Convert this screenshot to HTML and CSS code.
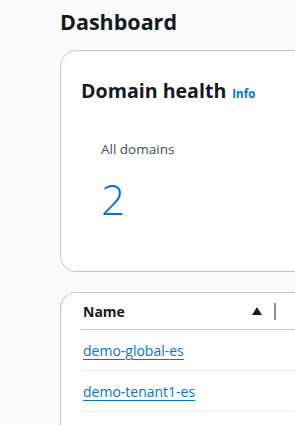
FILE: index.html
```html
<!DOCTYPE html>
<html lang="en">
<head>
    <meta charset="UTF-8">
    <meta name="viewport" content="width=device-width, initial-scale=1.0">
    <title>Dashboard</title>
    <link rel="stylesheet" href="styles.css">
</head>
<body>
    <div class="page">
        <h1 class="titulo">Dashboard</h1>

        <div class="tarjeta salud">
            <div class="cabecera">
                <h2>Domain health</h2>
                <a class="info" href="#">Info</a>
            </div>
            <div class="contador">
                <span class="etiqueta">All domains</span>
                <a class="numero" href="#">2</a>
            </div>
        </div>

        <div class="tarjeta tabla">
            <div class="fila encabezado">
                <span class="col-nombre">Name</span>
                <!-- flecha de orden ascendente -->
                <svg class="orden" width="10" height="8" viewBox="0 0 10 8"><polygon points="5,0 10,8 0,8" fill="#16191f"/></svg>
                <span class="separador"></span>
            </div>
            <div class="fila"><a href="#">demo-global-es</a></div>
            <div class="fila"><a href="#">demo-tenant1-es</a></div>
        </div>
    </div>
</body>
</html>
```

FILE: styles.css
```css
body {
    margin: 0;
    background: #fafafa;
    font-family: "Open Sans", Arial, sans-serif;
    color: #16191f;
    overflow: hidden;
}

.page {
    padding-left: 60px;
    width: 420px;
}

.titulo {
    margin: 0;
    padding-top: 6px;
    height: 44px;
    font-size: 21.5px;
    font-weight: 700;
    line-height: 32px;
}

.tarjeta {
    background: #fff;
    border: 1px solid #c6c6cd;
    border-radius: 16px;
}

.salud {
    height: 222px;
    padding: 22px 20px 0;
    box-sizing: border-box;
}

.cabecera {
    display: flex;
    align-items: baseline;
    gap: 6px;
    padding-top: 4px;
}

.cabecera h2 {
    margin: 0;
    font-size: 19.6px;
    font-weight: 700;
    line-height: 28px;
}

.info {
    color: #0972d3;
    font-size: 11.5px;
    font-weight: 700;
    text-decoration: none;
}

.contador {
    display: flex;
    flex-direction: column;
    padding: 32px 20px 0;
}

.etiqueta {
    font-size: 13.5px;
    color: #414d5c;
    line-height: 24px;
}

.numero {
    color: #0972d3;
    font-size: 42px;
    font-weight: 300;
    line-height: 60px;
    margin-top: 8px;
    text-decoration: none;
}

.tabla {
    margin-top: 20px;
    padding: 0 0 0 20px;
    border-bottom-left-radius: 0;
    border-bottom-right-radius: 0;
    border-bottom: none;
    height: 140px;
}

.fila {
    height: 40px;
    display: flex;
    align-items: center;
    border-bottom: 1px solid #e9ebed;
    font-size: 14px;
    padding-left: 2px;
}

.encabezado {
    height: 36px;
    border-bottom-color: #c6c6cd;
    font-weight: 700;
}

.col-nombre {
    width: 169px;
}

.orden {
    margin-right: 12px;
}

.separador {
    width: 2px;
    height: 17px;
    background: #8d9299;
}

.fila a {
    color: #0972d3;
    text-decoration: underline;
    text-underline-offset: 3px;
}
```
